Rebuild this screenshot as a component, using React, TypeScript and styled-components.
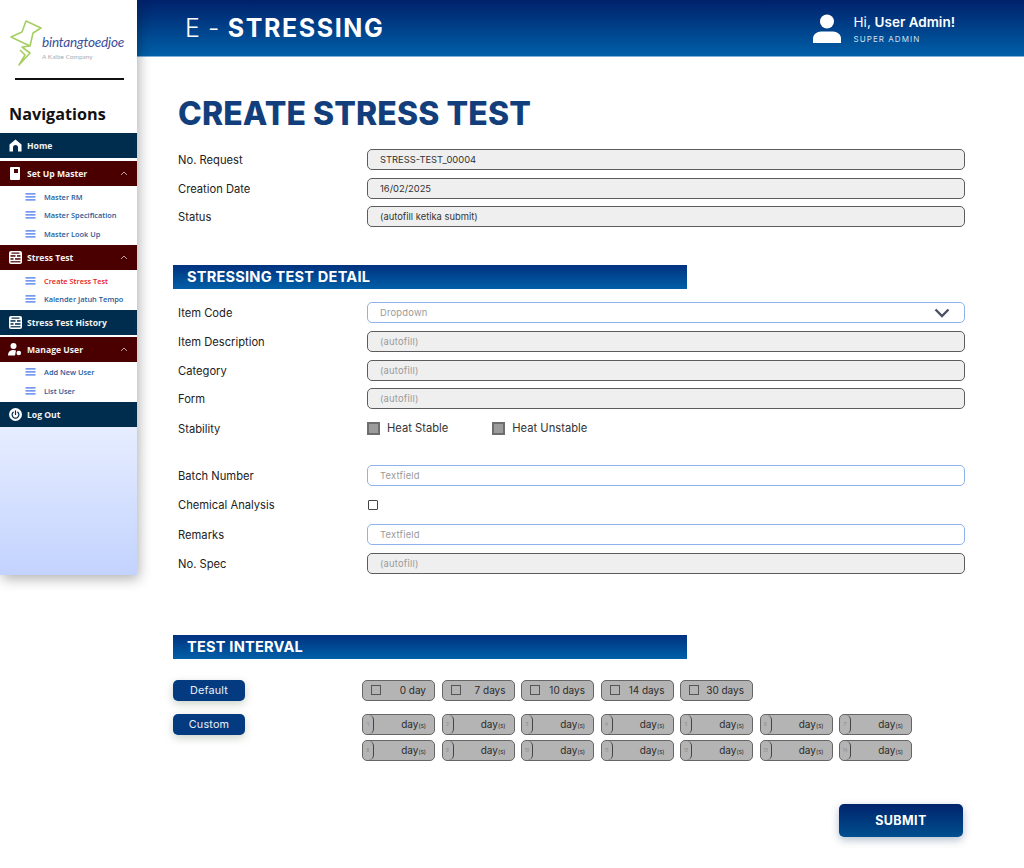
import React from 'react'
import styled, { createGlobalStyle } from 'styled-components'

const GlobalStyle = createGlobalStyle`
  html, body {
    margin: 0;
    padding: 0;
    background: #fff;
    font-family: 'Inter', 'Liberation Sans', sans-serif;
  }
`

function Bolt() {
  return (
    <svg width="34" height="46" viewBox="0 0 34 46" fill="none">
      <path
        d="M17 1 L32 8 L24 13 L21 26 L2 17 L13 12 Z M21 26 L13 27 L21 33 L10 45 L16 35 L11 30"
        stroke="#a6cf63"
        strokeWidth="1.6"
        strokeLinejoin="round"
      />
    </svg>
  )
}

function HomeIcon() {
  return (
    <svg width="13" height="13" viewBox="0 0 13 13" fill="#fff">
      <path
        d="M6.5 0.5 L12.5 5.5 V12.5 H9 V8.5 A2.5 2.5 0 0 0 4 8.5 V12.5 H0.5 V5.5 Z"
        strokeLinejoin="round"
      />
    </svg>
  )
}

function BookIcon() {
  return (
    <svg width="10" height="13" viewBox="0 0 10 13" fill="#fff">
      <path
        d="M1 0 H9 a1 1 0 0 1 1 1 V12 a1 1 0 0 1 -1 1 H1 a1 1 0 0 1 -1 -1 V1 a1 1 0 0 1 1 -1 Z M4 2 V6 H8 V2 Z"
        fillRule="evenodd"
      />
    </svg>
  )
}

function TestIcon({ dark }: { dark: string }) {
  return (
    <svg width="13" height="13" viewBox="0 0 13 13" fill="#fff">
      <rect width="13" height="13" rx="2" />
      <g fill={dark}>
        <rect x="2.5" y="1.5" width="8" height="1.2" />
        <rect x="1.5" y="4.2" width="5" height="1.5" />
        <rect x="8" y="4.2" width="3.5" height="1.5" />
        <rect x="1.5" y="7.2" width="3" height="1.5" />
        <rect x="6" y="7.2" width="5.5" height="1.5" />
        <rect x="1.5" y="10.2" width="10" height="1.2" />
      </g>
    </svg>
  )
}

function UserCogIcon() {
  return (
    <svg width="14" height="13" viewBox="0 0 14 13" fill="#fff">
      <circle cx="5.5" cy="3" r="3" />
      <path d="M0 12.5 C0 8.5 2.5 7 5.5 7 C6.5 7 7.2 7.2 8 7.5 L7 12.5 Z" />
      <circle cx="10.8" cy="10" r="2.3" />
    </svg>
  )
}

function PowerIcon() {
  return (
    <svg width="13" height="13" viewBox="0 0 13 13">
      <circle cx="6.5" cy="6.5" r="6.5" fill="#fff" />
      <path d="M4.2 4.2 A3.4 3.4 0 1 0 8.8 4.2 M6.5 2.8 V6.5" stroke="#002c4d" strokeWidth="1.2" fill="none" strokeLinecap="round" />
    </svg>
  )
}

function Caret() {
  return (
    <svg width="8" height="5" viewBox="0 0 8 5" fill="none">
      <path d="M1 4 L4 1 L7 4" stroke="#b9a2a2" strokeWidth="1" />
    </svg>
  )
}

function Bars() {
  return (
    <svg width="11" height="8" viewBox="0 0 11 8" fill="#3b6fe8">
      <rect width="10" height="1.2" x="0.5" y="0.3" />
      <rect width="10" height="1.2" x="0.5" y="3.3" />
      <rect width="10" height="1.2" x="0.5" y="6.3" />
    </svg>
  )
}

function UserIcon() {
  return (
    <svg width="28" height="29" viewBox="0 0 28 29" fill="#fff">
      <circle cx="14" cy="7.5" r="7" />
      <path d="M0 29 V24.5 C0 20.5 4 17.5 8 17.5 H20 C24 17.5 28 20.5 28 24.5 V29 Z" />
    </svg>
  )
}

function Chevron() {
  return (
    <svg width="16" height="10" viewBox="0 0 16 10" fill="none">
      <path d="M1.5 1.5 L8 8 L14.5 1.5" stroke="#4a5160" strokeWidth="2.4" />
    </svg>
  )
}

type NavEntry = { label: string; icon: React.ReactNode; tone: 'navy' | 'maroon'; gap: number; open?: boolean; items?: { label: string; active?: boolean }[] }

const nav: NavEntry[] = [
  { label: 'Home', icon: <HomeIcon />, tone: 'navy', gap: 0 },
  {
    label: 'Set Up Master',
    icon: <BookIcon />,
    tone: 'maroon',
    gap: 3,
    open: true,
    items: [{ label: 'Master RM' }, { label: 'Master Specification' }, { label: 'Master Look Up' }],
  },
  {
    label: 'Stress Test',
    icon: <TestIcon dark="#4a0000" />,
    tone: 'maroon',
    gap: 0.4,
    open: true,
    items: [{ label: 'Create Stress Test', active: true }, { label: 'Kalender Jatuh Tempo' }],
  },
  { label: 'Stress Test History', icon: <TestIcon dark="#002c4d" />, tone: 'navy', gap: 0 },
  {
    label: 'Manage User',
    icon: <UserCogIcon />,
    tone: 'maroon',
    gap: 2,
    open: true,
    items: [{ label: 'Add New User' }, { label: 'List User' }],
  },
  { label: 'Log Out', icon: <PowerIcon />, tone: 'navy', gap: 0.5 },
]

const presets = ['0 day', '7 days', '10 days', '14 days', '30 days']
const customDays = [
  [1, 2, 3, 4, 5, 6, 7],
  [8, 9, 10, 11, 12, 13, 14],
]

export default function App() {
  return (
    <Page>
      <GlobalStyle />
      <Sidebar>
        <LogoArea>
          <Bolt />
          <LogoText>
            <LogoName>bintangtoedjoe</LogoName>
            <LogoSub>A Kalbe Company</LogoSub>
          </LogoText>
        </LogoArea>
        <LogoRule />
        <NavTitle>Navigations</NavTitle>
        {nav.map((entry) => (
          <NavGroup key={entry.label} $gap={entry.gap}>
            <NavBar $tone={entry.tone}>
              <NavIcon>{entry.icon}</NavIcon>
              <NavLabel>{entry.label}</NavLabel>
              {entry.open && <Caret />}
            </NavBar>
            {entry.items && (
              <SubList>
                {entry.items.map((item) => (
                  <SubItem key={item.label} $active={item.active}>
                    <Bars />
                    {item.label}
                  </SubItem>
                ))}
              </SubList>
            )}
          </NavGroup>
        ))}
        <SideFill />
      </Sidebar>

      <Main>
        <Header>
          <Brand>
            E - <strong>STRESSING</strong>
          </Brand>
          <Profile>
            <UserIcon />
            <ProfileText>
              <Greeting>
                Hi, <strong>User Admin!</strong>
              </Greeting>
              <Role>SUPER ADMIN</Role>
            </ProfileText>
          </Profile>
        </Header>

        <Content>
          <Title>CREATE STRESS TEST</Title>

          <Row>
            <Label>No. Request</Label>
            <Field $kind="readonly" $dark>STRESS-TEST_00004</Field>
          </Row>
          <Row>
            <Label>Creation Date</Label>
            <Field $kind="readonly" $dark>16/02/2025</Field>
          </Row>
          <Row>
            <Label>Status</Label>
            <Field $kind="readonly" $dark>(autofill ketika submit)</Field>
          </Row>

          <SectionBar $top={38}>STRESSING TEST DETAIL</SectionBar>

          <Row $top={13}>
            <Label>Item Code</Label>
            <Field $kind="input">
              Dropdown
              <Chevron />
            </Field>
          </Row>
          <Row>
            <Label>Item Description</Label>
            <Field $kind="readonly">(autofill)</Field>
          </Row>
          <Row>
            <Label>Category</Label>
            <Field $kind="readonly">(autofill)</Field>
          </Row>
          <Row>
            <Label>Form</Label>
            <Field $kind="readonly">(autofill)</Field>
          </Row>
          <Row $top={8.3}>
            <Label>Stability</Label>
            <RadioLine>
              <RadioItem>
                <GreyBox />
                Heat Stable
              </RadioItem>
              <RadioItem>
                <GreyBox />
                Heat Unstable
              </RadioItem>
            </RadioLine>
          </Row>
          <Row $top={26.4}>
            <Label>Batch Number</Label>
            <Field $kind="input">Textfield</Field>
          </Row>
          <Row $top={8}>
            <Label>Chemical Analysis</Label>
            <CheckLine>
              <EmptyBox />
            </CheckLine>
          </Row>
          <Row $top={9}>
            <Label>Remarks</Label>
            <Field $kind="input">Textfield</Field>
          </Row>
          <Row>
            <Label>No. Spec</Label>
            <Field $kind="readonly">(autofill)</Field>
          </Row>

          <SectionBar $top={61}>TEST INTERVAL</SectionBar>

          <IntervalGrid>
            <PillButton>Default</PillButton>
            <ChipRow>
              {presets.map((preset) => (
                <PresetChip key={preset}>
                  <ChipBox />
                  {preset}
                </PresetChip>
              ))}
            </ChipRow>
            <PillButton>Custom</PillButton>
            <ChipStack>
              {customDays.map((line) => (
                <CustomRow key={line[0]}>
                  {line.map((day) => (
                    <CustomChip key={day}>
                      <DayIndex>{day}</DayIndex>
                      <DayText>
                        day<small>(s)</small>
                      </DayText>
                    </CustomChip>
                  ))}
                </CustomRow>
              ))}
            </ChipStack>
          </IntervalGrid>

          <SubmitLine>
            <SubmitButton>SUBMIT</SubmitButton>
          </SubmitLine>
        </Content>
      </Main>
    </Page>
  )
}

const Page = styled.div`
  display: flex;
  align-items: flex-start;
  width: 1024px;
  height: 868px;
  overflow: hidden;
  background: #fff;
`

const Sidebar = styled.aside`
  position: relative;
  z-index: 2;
  display: flex;
  flex-direction: column;
  flex: none;
  width: 137px;
  height: 575px;
  background: #fff;
  box-shadow: 2px 4px 12px rgba(0, 0, 0, 0.3);
  font-family: 'Open Sans', sans-serif;
`

const LogoArea = styled.div`
  display: flex;
  align-items: flex-start;
  height: 66px;
  padding: 20px 0 0 9px;
  box-sizing: border-box;
`

const LogoText = styled.div`
  margin: 15px 0 0 -1px;
  display: flex;
  flex-direction: column;
`

const LogoName = styled.span`
  font-family: 'Lato', sans-serif;
  font-style: italic;
  font-size: 13.6px;
  line-height: 14px;
  letter-spacing: -0.2px;
  color: #3c4f9e;
`

const LogoSub = styled.span`
  font-family: 'Lato', sans-serif;
  font-size: 6.5px;
  line-height: 9px;
  margin-top: 3px;
  color: #a9adb0;
`

const LogoRule = styled.div`
  width: 109px;
  height: 2px;
  margin: 12px 0 0 15px;
  background: #111;
`

const NavTitle = styled.div`
  margin: 22px 0 7.25px 9px;
  height: 24px;
  font-size: 16.2px;
  line-height: 24px;
  font-weight: 700;
  color: #111;
`

const NavGroup = styled.div<{ $gap: number }>`
  margin-top: ${(p) => p.$gap}px;
`

const NavBar = styled.div<{ $tone: 'navy' | 'maroon' }>`
  display: flex;
  align-items: center;
  height: 25px;
  padding: 0 9px 0 8px;
  background: ${(p) => (p.$tone === 'navy' ? '#002c4d' : '#4a0000')};
  color: #f2f2f2;
`

const NavIcon = styled.span`
  display: flex;
  justify-content: center;
  width: 14px;
  margin-right: 5px;
`

const NavLabel = styled.span`
  flex: 1;
  font-size: 8.6px;
  font-weight: 700;
  white-space: nowrap;
`

const SubList = styled.ul`
  list-style: none;
  margin: 0;
  padding: 1px 0 1.5px;
`

const SubItem = styled.li<{ $active?: boolean }>`
  display: flex;
  align-items: center;
  gap: 8px;
  height: 18.7px;
  padding-left: 25px;
  font-size: 7.4px;
  font-weight: 600;
  white-space: nowrap;
  color: ${(p) => (p.$active ? '#e8201c' : '#1f5a99')};
`

const SideFill = styled.div`
  flex: 1;
  margin-top: 0;
  background: linear-gradient(180deg, #e6edff 0%, #c3d3ff 100%);
`

const Main = styled.main`
  flex: 1;
  min-width: 0;
`

const Header = styled.header`
  display: flex;
  align-items: center;
  justify-content: space-between;
  box-sizing: border-box;
  height: 57px;
  padding: 0 69px 0 48px;
  background: linear-gradient(180deg, #00216b 0%, #0060a8 100%);
  border-bottom: 1px solid #7fb0d8;
  color: #fff;
`

const Brand = styled.div`
  font-size: 25px;
  font-weight: 300;
  letter-spacing: 0.6px;
  white-space: pre;

  strong {
    font-weight: 700;
    letter-spacing: 1.6px;
  }
`

const Profile = styled.div`
  display: flex;
  align-items: center;
  gap: 13px;
`

const ProfileText = styled.div`
  padding-top: 2px;
`

const Greeting = styled.div`
  font-size: 13.5px;
  line-height: 17px;
  font-weight: 400;
  margin-bottom: 3px;

  strong {
    font-weight: 600;
  }
`

const Role = styled.div`
  font-size: 8px;
  line-height: 11px;
  letter-spacing: 1.05px;
  color: #cfe0f0;
`

const Content = styled.div`
  padding: 0 59px 0 36px;
`

const Title = styled.h1`
  margin: 0 0 15px 5px;
  padding-top: 37px;
  font-size: 32px;
  line-height: 40px;
  font-weight: 800;
  letter-spacing: 0.1px;
  color: #123f7c;
`

const Row = styled.div<{ $top?: number }>`
  display: grid;
  grid-template-columns: 189px 598px;
  align-items: center;
  height: 21px;
  margin: ${(p) => p.$top ?? 7.7}px 0 0 5px;

  &:first-of-type {
    margin-top: 0;
  }
`

const Label = styled.div`
  padding-top: 1px;
  font-size: 11.2px;
  color: #222;
`

const Field = styled.div<{ $kind: 'readonly' | 'input'; $dark?: boolean }>`
  display: flex;
  align-items: center;
  justify-content: space-between;
  box-sizing: border-box;
  height: 21px;
  padding: 0 14px 0 12px;
  border-radius: 5px;
  font-size: 9.4px;
  letter-spacing: ${(p) => (p.$dark ? 0 : 0.2)}px;
  border: 1px solid ${(p) => (p.$kind === 'input' ? '#8fb2ea' : '#5c5c5c')};
  background: ${(p) => (p.$kind === 'input' ? '#fff' : '#efefef')};
  color: ${(p) => (p.$dark ? '#333' : '#9a9a9a')};
`

const SectionBar = styled.h2<{ $top: number }>`
  box-sizing: border-box;
  width: 514px;
  height: 24px;
  margin: ${(p) => p.$top}px 0 0;
  padding-left: 14px;
  font-size: 14.6px;
  line-height: 24px;
  font-weight: 700;
  letter-spacing: 0.2px;
  color: #fff;
  background: linear-gradient(180deg, #00327f 0%, #0060a8 100%);
`

const RadioLine = styled.div`
  display: flex;
  align-items: center;
  gap: 44px;
`

const RadioItem = styled.div`
  display: flex;
  align-items: center;
  gap: 7px;
  font-size: 11.2px;
  color: #333;
`

const GreyBox = styled.span`
  box-sizing: border-box;
  width: 13px;
  height: 13px;
  background: #9b9b9b;
  border: 2px solid #6e6e6e;
`

const CheckLine = styled.div`
  display: flex;
  padding-left: 1px;
`

const EmptyBox = styled.span`
  box-sizing: border-box;
  width: 10px;
  height: 10px;
  border: 1px solid #444;
  border-radius: 1px;
`

const IntervalGrid = styled.div`
  display: grid;
  grid-template-columns: 189px 1fr;
  row-gap: 13px;
  margin-top: 21px;
`

const PillButton = styled.div`
  display: flex;
  align-items: center;
  justify-content: center;
  width: 72px;
  height: 21px;
  border-radius: 5px;
  font-size: 10.8px;
  letter-spacing: 0.2px;
  color: #eaf0fa;
  background: #043a80;
  box-shadow: 0 3px 8px rgba(80, 110, 70, 0.3);
`

const ChipRow = styled.div`
  display: flex;
  gap: 6.5px;
`

const PresetChip = styled.div`
  display: flex;
  align-items: center;
  justify-content: space-between;
  box-sizing: border-box;
  width: 73px;
  height: 21px;
  padding: 0 8px;
  border: 1px solid #666;
  border-radius: 5px;
  background: #b4b4b4;
  font-size: 10px;
  color: #2c2c2c;
`

const ChipBox = styled.span`
  box-sizing: border-box;
  width: 10px;
  height: 10px;
  border: 1px solid #555;
`

const ChipStack = styled.div`
  display: flex;
  flex-direction: column;
  gap: 5px;
`

const CustomRow = styled.div`
  display: flex;
  gap: 6.5px;
`

const CustomChip = styled.div`
  display: flex;
  align-items: center;
  justify-content: space-between;
  box-sizing: border-box;
  width: 73px;
  height: 21px;
  padding-right: 8px;
  border: 1px solid #666;
  border-radius: 5px;
  background: #b4b4b4;
`

const DayIndex = styled.span`
  display: flex;
  align-items: center;
  justify-content: center;
  box-sizing: border-box;
  width: 11px;
  height: 100%;
  border-right: 1px solid #444;
  border-radius: 5px;
  font-size: 4.5px;
  color: #888;
`

const DayText = styled.span`
  font-size: 10px;
  color: #2c2c2c;

  small {
    font-size: 6px;
  }
`

const SubmitLine = styled.div`
  display: flex;
  justify-content: flex-end;
  margin-top: 43px;
  width: 790px;
`

const SubmitButton = styled.div`
  display: flex;
  align-items: center;
  justify-content: center;
  width: 124px;
  height: 33px;
  border-radius: 5px;
  font-size: 12.5px;
  font-weight: 700;
  letter-spacing: 0.4px;
  color: #fff;
  background: linear-gradient(180deg, #00236c 0%, #00508f 100%);
  box-shadow: 0 3px 8px rgba(0, 40, 90, 0.3);
`
